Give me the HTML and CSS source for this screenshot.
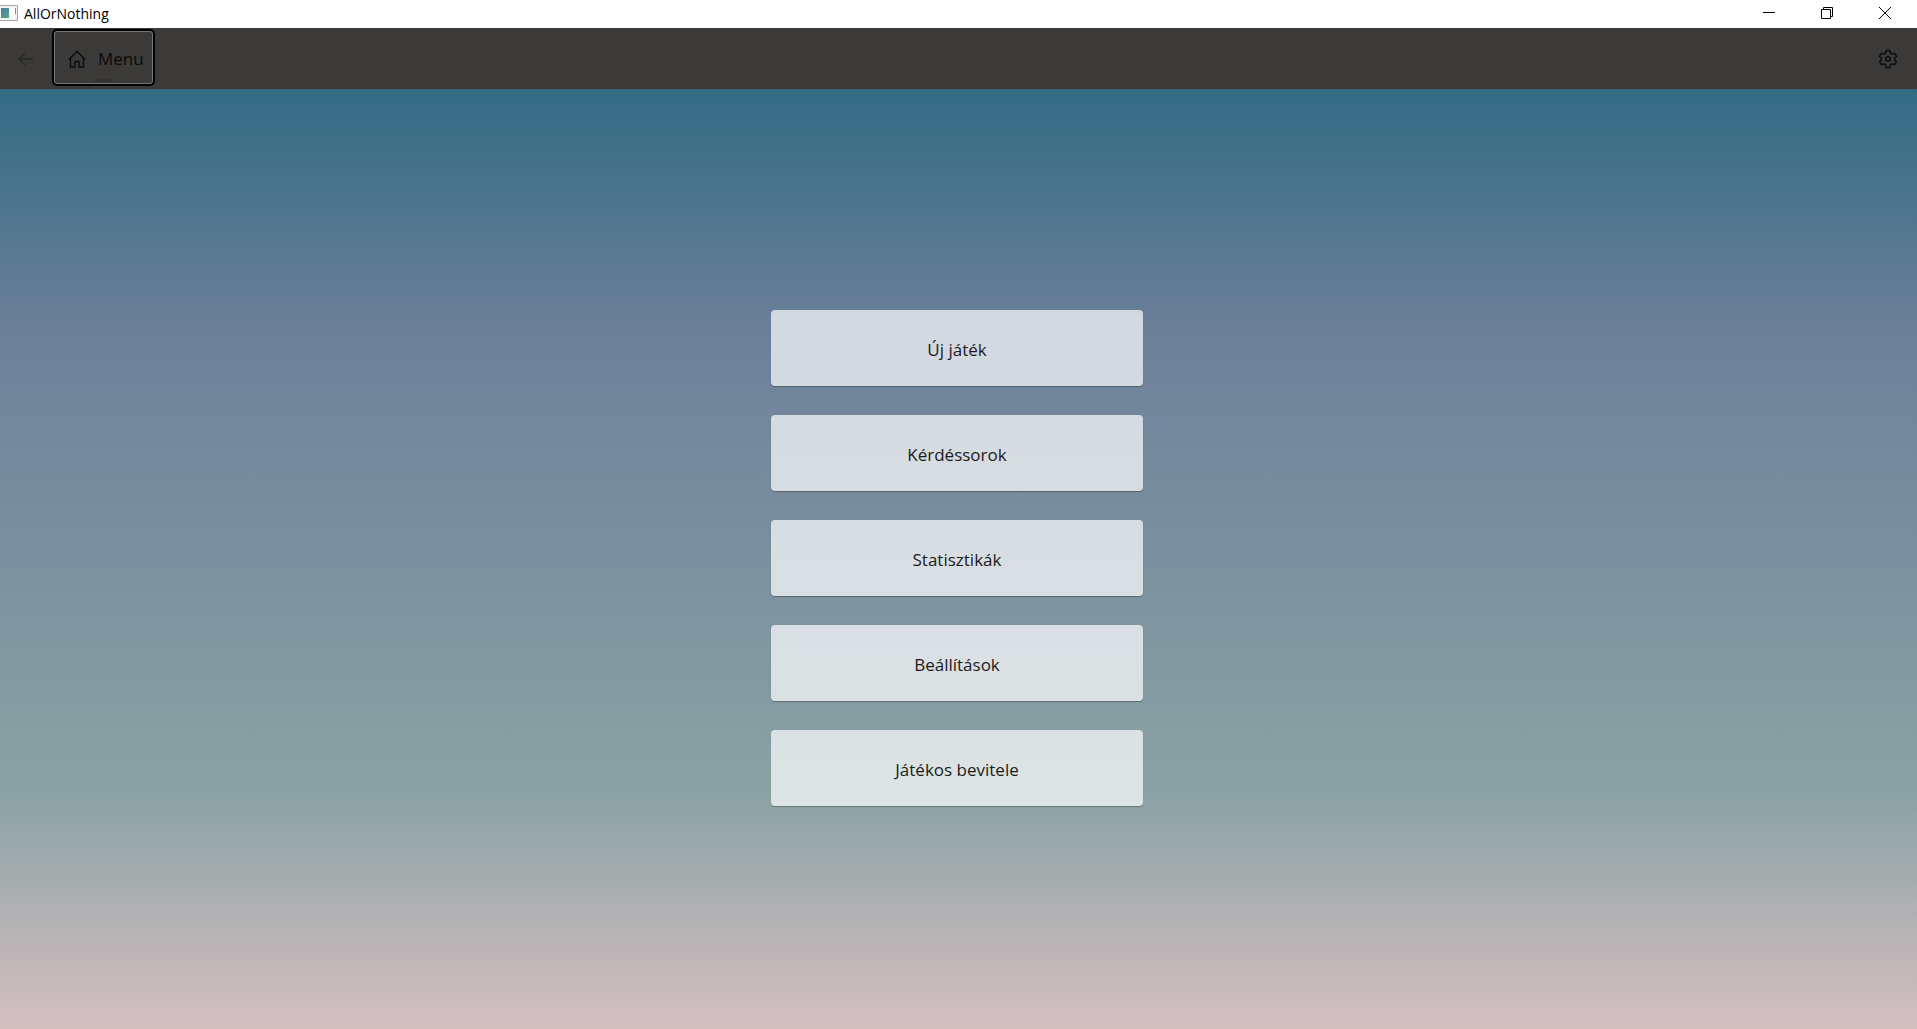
FILE: index.html
```html
<!DOCTYPE html>
<html lang="hu">
<head>
<meta charset="utf-8">
<meta name="viewport" content="width=device-width, initial-scale=1">
<title>AllOrNothing</title>
<link rel="stylesheet" href="styles.css">
</head>
<body>
<header class="titlebar">
  <svg class="app-icon" width="18" height="16" viewBox="0 0 18 16" aria-hidden="true">
    <defs><linearGradient id="app" x1="0" y1="0" x2="1" y2="1"><stop offset="0" stop-color="#4a7fa8"/><stop offset="1" stop-color="#53a878"/></linearGradient></defs>
    <path d="M-1 .5H17.5V15.500H-1z" fill="#f4f4f4" stroke="#a5a8ac"/>
    <path d="M1 3h8v10H1z" fill="url(#app)"/>
    <path d="M10 3h5v10h-5z" fill="#fff"/>
    <path d="M15 3h1v6h-1z" fill="#53a878"/>
  </svg>
  <span class="title">AllOrNothing</span>
  <div class="window-controls">
    <button class="window-button" aria-label="Minimize"><svg width="12" height="12" viewBox="0 0 12 12"><path d="M0 5.500h12"/></svg></button>
    <button class="window-button" aria-label="Restore"><svg width="12" height="12" viewBox="0 0 12 12"><path d="M.5 2.500h9v9h-9zM2.500 2.500v-2h9v9h-2"/></svg></button>
    <button class="window-button" aria-label="Close"><svg width="12" height="12" viewBox="0 0 12 12"><path d="M0 0l12 12M12 0L0 12"/></svg></button>
  </div>
</header>
<nav class="navbar">
  <button class="nav-back" aria-label="Back" disabled><svg width="16" height="14" viewBox="0 0 16 14"><path d="M15 7H1M7 1L1 7l6 6"/></svg></button>
  <button class="nav-item">
    <svg width="18" height="18" viewBox="0 0 18 18"><path d="M1 9.200L9 1.500l8 7.700M2.500 8V17H7v-5.500h4V17h4.500V8"/></svg>
    <span>Menu</span>
  </button>
  <button class="nav-settings" aria-label="Settings"><svg width="20" height="20" viewBox="0 0 20 20"><path d="M8.200 1.500h3.600l.7 2.700 1.500.9 2.700-.8 1.800 3.100-2 1.900v1.400l2 1.900-1.800 3.100-2.700-.8-1.500.9-.7 2.700H8.200l-.7-2.700-1.500-.9-2.700.8-1.800-3.100 2-1.900V9.300l-2-1.900 1.800-3.100 2.700.8 1.500-.9z" stroke-linejoin="round"/><circle cx="10" cy="10" r="2.300"/></svg></button>
</nav>
<main class="menu">
  <button class="menu-button">Új játék</button>
  <button class="menu-button">Kérdéssorok</button>
  <button class="menu-button">Statisztikák</button>
  <button class="menu-button">Beállítások</button>
  <button class="menu-button">Játékos bevitele</button>
</main>
</body>
</html>
```
FILE: styles.css
```css
* { box-sizing: border-box; }

body {
  margin: 0;
  min-height: 100vh;
  display: flex;
  flex-direction: column;
  font-family: "Segoe UI", "Open Sans", "Noto Sans", sans-serif;
  color: #1b1b1b;
}

button {
  font: inherit;
  color: inherit;
  border: 0;
  padding: 0;
  background: none;
}

svg { display: block; fill: none; stroke: currentColor; }

.titlebar {
  display: flex;
  align-items: center;
  height: 28px;
  padding-bottom: 2px;
  background: #fff;
  color: #000;
  font-size: 14px;
}

.app-icon { margin-right: 6px; stroke: none; }

.window-controls { display: flex; margin-left: auto; }

.window-button {
  display: grid;
  place-items: center;
  width: 58px;
  height: 26px;
  padding-right: 6px;
}

.navbar {
  display: flex;
  align-items: center;
  height: 61px;
  padding-bottom: 2px;
  background: #3b3a38;
  color: #0c0c0c;
}

.navbar svg { stroke-width: 1.4; }

.nav-back {
  display: grid;
  place-items: center;
  width: 52px;
  height: 56px;
  padding-top: 2px;
  color: #272625;
}

.nav-item {
  position: relative;
  display: flex;
  align-items: center;
  gap: 12px;
  height: 57px;
  padding: 2px 9px 0 14px;
  border: 2px solid #000;
  border-radius: 5px;
  box-shadow: inset 0 0 0 1px #777675;
  font-size: 17px;
}

.nav-item::after {
  content: "";
  position: absolute;
  bottom: 2px;
  left: 50%;
  width: 19px;
  height: 3px;
  margin-left: -9px;
  border-radius: 2px;
  background: #333231;
}

.nav-settings {
  display: grid;
  place-items: center;
  width: 58px;
  height: 56px;
  padding-top: 2px;
  margin-left: auto;
}

.menu {
  flex: 1;
  display: flex;
  flex-direction: column;
  align-items: center;
  justify-content: center;
  gap: 29px;
  padding: 24px 3px 26px 0;
  background: linear-gradient(#326b83, #6d809a 26%, #8ba2a4 75%, #d5bfc1);
}

.menu-button {
  width: 372px;
  max-width: 100%;
  height: 76px;
  padding-top: 2px;
  border-radius: 4px;
  background: rgba(255, 255, 255, 0.7);
  box-shadow: 0 1px 1px rgba(0, 0, 0, 0.3);
  font-size: 17px;
}
```
